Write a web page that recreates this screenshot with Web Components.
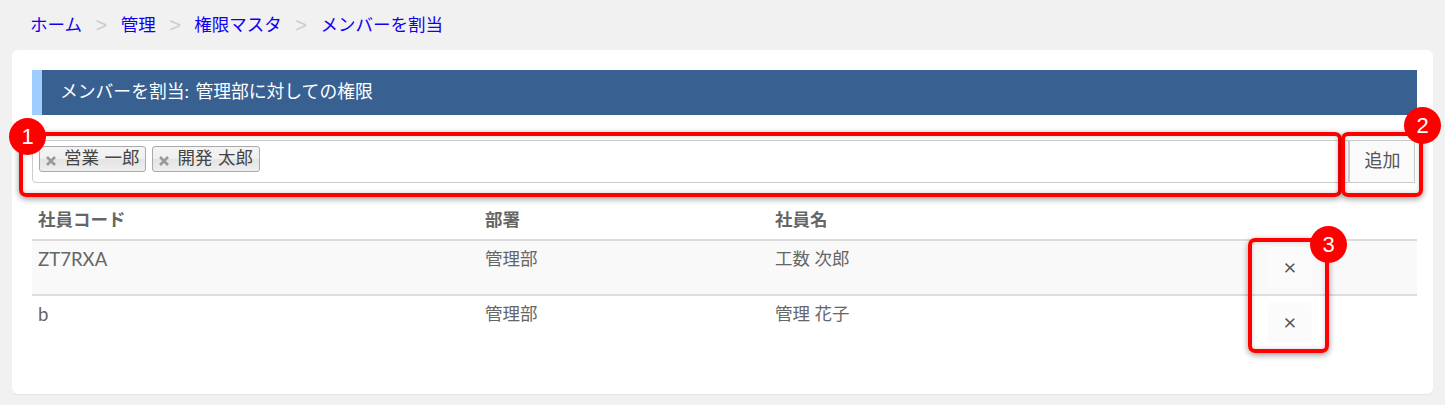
<!DOCTYPE html>
<html lang="ja"><head><meta charset="utf-8">
<style>
html,body{margin:0;padding:0;background:#f1f1f1;height:405px;overflow:hidden}
body{font:17.5px/24px Lato,"Noto Sans CJK JP",sans-serif;color:#666}
</style></head><body>
<app-page>
<bread-crumbs slot="crumbs"><a>ホーム</a><span>&gt;</span><a>管理</a><span>&gt;</span><a>権限マスタ</a><span>&gt;</span><a>メンバーを割当</a></bread-crumbs>
<page-title slot="title">メンバーを割当: 管理部に対しての権限</page-title>
<member-picker slot="picker"><tag-chip>営業 一郎</tag-chip><tag-chip>開発 太郎</tag-chip></member-picker>
<member-table slot="table">
<member-row code="社員コード" dept="部署" name="社員名" head></member-row>
<member-row code="ZT7RXA" dept="管理部" name="工数 次郎" odd></member-row>
<member-row code="b" dept="管理部" name="管理 花子"></member-row>
</member-table>
</app-page>
<script>
function def(name,html){customElements.define(name,class extends HTMLElement{
  constructor(){super();this.attachShadow({mode:'open'}).innerHTML=html}
})}
def('bread-crumbs',`<style>:host{display:block;height:50px;box-sizing:border-box;padding:13px 0 0 30px;font-size:17.5px;line-height:24px}
nav{display:flex}
::slotted(a){color:#1400f0}
::slotted(span){color:#ccc;width:38.7px;text-align:center;font-family:"Liberation Sans",sans-serif;font-size:20px}
</style><nav><slot></slot></nav>`);
customElements.define('app-page',class extends HTMLElement{constructor(){super();this.attachShadow({mode:'open'}).innerHTML=`<style>
:host{display:block}
.card{position:relative;margin:0 12px;width:1421px;height:344px;box-sizing:border-box;background:#fff;border-radius:6px;box-shadow:0 1px 1px rgba(0,0,0,.05);padding:20px 16px 0 20px}
.mark{position:absolute;box-sizing:border-box;border:4px solid #f00;border-radius:7px;box-shadow:0 2px 6px rgba(0,0,0,.4),inset 0 0 5px rgba(0,0,0,.18)}
.dot{position:absolute;width:37px;height:37px;border-radius:50%;background:#f00;color:#fff;font:22px/37px "Liberation Sans",sans-serif;text-align:center}
</style><slot name="crumbs"></slot><div class="card">
<slot name="title"></slot><slot name="picker"></slot><slot name="table"></slot>
<div class="mark" style="left:7px;top:82px;width:1323px;height:65px"></div>
<div class="mark" style="left:1329px;top:82px;width:82px;height:65px"></div>
<div class="mark" style="left:1236px;top:188px;width:81px;height:115px"></div>
<div class="dot" style="left:-3px;top:68px">1</div>
<div class="dot" style="left:1392px;top:57px">2</div>
<div class="dot" style="left:1298px;top:176px">3</div>
</div>`}});
def('page-title',`<style>:host{display:block;height:45px;box-sizing:border-box;background:#386192;border-left:10px solid #a0cdff;color:#fff;padding:0 0 0 18px;font-size:17.8px;line-height:43px;word-spacing:2px}</style><slot></slot>`);
def('member-picker',`<style>:host{display:flex;margin-top:25px;height:43px;width:1383px}
.input{flex:1;box-sizing:border-box;border:1px solid #ccc;border-radius:4px 0 0 4px;padding:5px 6px;display:flex;gap:6px;align-items:flex-start}
button{width:66px;box-sizing:border-box;border:1px solid #ccc;background:#fafafa;color:#555;font:inherit;font-size:18px;padding:0 0 3px 1px}
</style><div class="input"><slot></slot></div><button>追加</button>`);
def('tag-chip',`<style>:host{display:flex;height:26px;box-sizing:border-box;border:1px solid #aaa;border-radius:3px;background:linear-gradient(#f4f4f4,#f0f0f0 50%,#e4e4e4 52%,#eee);color:#444;padding:0 6px 3px 6px;font-size:17.5px;line-height:22px;align-items:center;gap:8px;word-spacing:1px}
svg{margin-top:7px}
</style><svg width="10" height="10" viewBox="0 0 10 10"><path d="M1 1l8 8M9 1l-8 8" stroke="#999" stroke-width="2.6" fill="none"/></svg><slot></slot>`);
def('member-table',`<style>:host{display:block;margin-top:25px;width:1385px}</style><slot></slot>`);
customElements.define('member-row',class extends HTMLElement{constructor(){super();
const h=this.hasAttribute('head');const o=this.hasAttribute('odd');
const code=this.getAttribute('code');const latin=/^[\x00-\x7f]+$/.test(code);
this.attachShadow({mode:'open'}).innerHTML=`<style>
:host{display:grid;grid-template-columns:447px 290px 480px 1fr;box-sizing:border-box;height:${h?'31px':'55px'};
${h?'':'border-top:2px solid #ddd;'}${o?'background:#f9f9f9;':''}${h?'font-weight:bold;':''}padding:${h?'0':'4px'} 6px 0;line-height:${h?'24px':'28px'}}
.b{display:flex;justify-content:flex-start}
.c{${latin?'font-size:18.6px;':''}}
button{width:44px;height:41px;margin:2px 0 0 13px;border:0;border-radius:4px;background:#fbfbfb;color:#555;padding:0 0 2px;font:22px/36px Lato,sans-serif;text-align:center}
</style><div class="c">${code}</div><div>${this.getAttribute('dept')}</div><div>${this.getAttribute('name')}</div>
<div class="b">${h?'':'<button>×</button>'}</div>`}});
</script>
</body></html>
